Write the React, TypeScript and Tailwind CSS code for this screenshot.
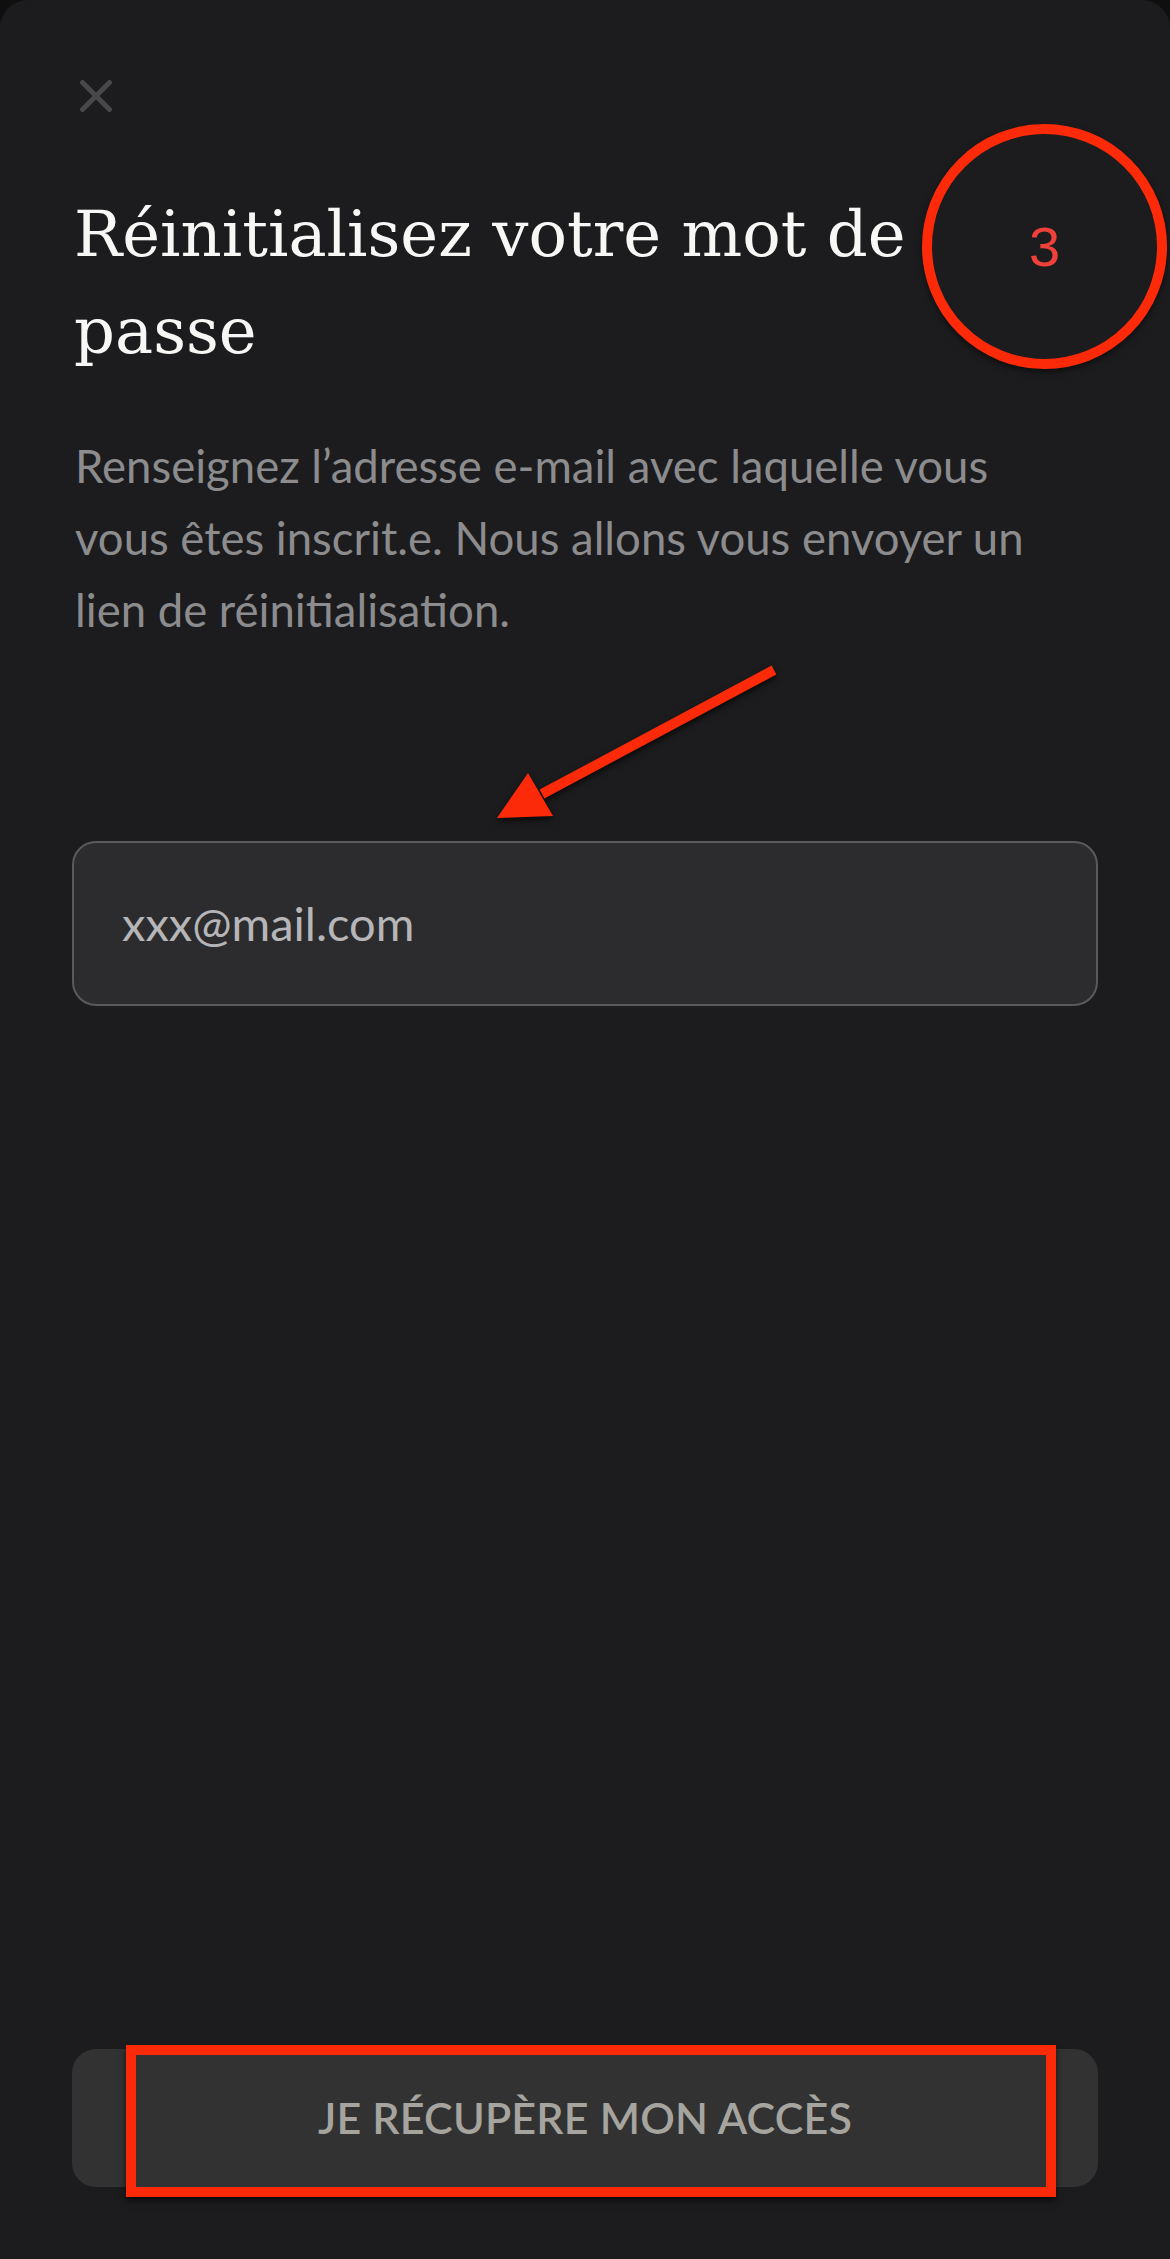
import { useState } from 'react';

// Close glyph drawn as two rounded strokes
function CloseIcon() {
  return (
    <svg width="32" height="32" viewBox="0 0 32 32" fill="none">
      <path d="M2.5 2.5 29.5 29.5M29.5 2.5 2.5 29.5" stroke="#48484a" strokeWidth="5" strokeLinecap="round" />
    </svg>
  );
}

function PointerArrow() {
  return (
    <svg
      className="absolute left-[480px] top-[650px] drop-shadow-[0_3px_3px_rgba(0,0,0,0.7)]"
      width="320"
      height="190"
      viewBox="0 0 320 190"
      fill="none"
    >
      <path d="M294 20 L62 144" stroke="#fd2a0a" strokeWidth="10" strokeLinecap="butt" />
      <path d="M17 168 L48 123 L73 166 Z" fill="#fd2a0a" />
    </svg>
  );
}

export default function App() {
  const [email, setEmail] = useState('');

  return (
    <div className="w-[1170px] h-[2259px] bg-[#0f0f10] overflow-hidden">
      <div className="relative h-full rounded-t-[28px] bg-[#1c1c1e] flex flex-col px-[72px] pb-[72px]">
        <button className="mt-[80px] ml-[8px] w-[32px] h-[32px] flex items-center justify-center">
          <CloseIcon />
        </button>

        <h1 className="mt-[74px] ml-[2px] max-w-[960px] text-[64px] leading-[97px] text-[#f7f7f5] font-normal font-['DejaVu_Serif',serif]">
          Réinitialisez votre mot de passe
        </h1>

        <p className="mt-[50px] ml-[3px] max-w-[1000px] text-[45.5px] leading-[72px] text-[#8c8c8e] font-['Lato',sans-serif]">
          Renseignez l’adresse e-mail avec laquelle vous vous êtes inscrit.e. Nous allons vous envoyer un lien de réinitialisation.
        </p>

        <div className="mt-[195px] h-[165px] rounded-[24px] border-2 border-[#5a5a5c] bg-[#2c2c2e] flex items-center px-[48px]">
          <input
            value={email}
            onChange={(e) => setEmail(e.target.value)}
            placeholder="xxx@mail.com"
            className="w-full bg-transparent outline-none text-[47px] text-[#b6b6b8] placeholder:text-[#b6b6b8] font-['Lato',sans-serif]"
          />
        </div>

        <button className="mt-auto h-[138px] rounded-[24px] bg-[#323232] flex items-center justify-center text-[43px] font-semibold tracking-[0.2px] text-[#a6a49f] font-['Lato',sans-serif]">
          JE RÉCUPÈRE MON ACCÈS
        </button>

        {/* step marker */}
        <div className="absolute left-[922px] top-[124px] w-[245px] h-[245px] rounded-full border-[10px] border-[#fd2a0a] flex items-center justify-center shadow-[0_3px_6px_rgba(0,0,0,0.5)]">
          <span className="text-[56px] leading-none text-[#f0403a] font-['Liberation_Sans',sans-serif]">3</span>
        </div>

        <PointerArrow />

        <div className="absolute left-[126px] top-[2045px] w-[930px] h-[152px] border-[10px] border-[#fd2a0a] shadow-[0_4px_6px_rgba(0,0,0,0.6)]" />
      </div>
    </div>
  );
}
